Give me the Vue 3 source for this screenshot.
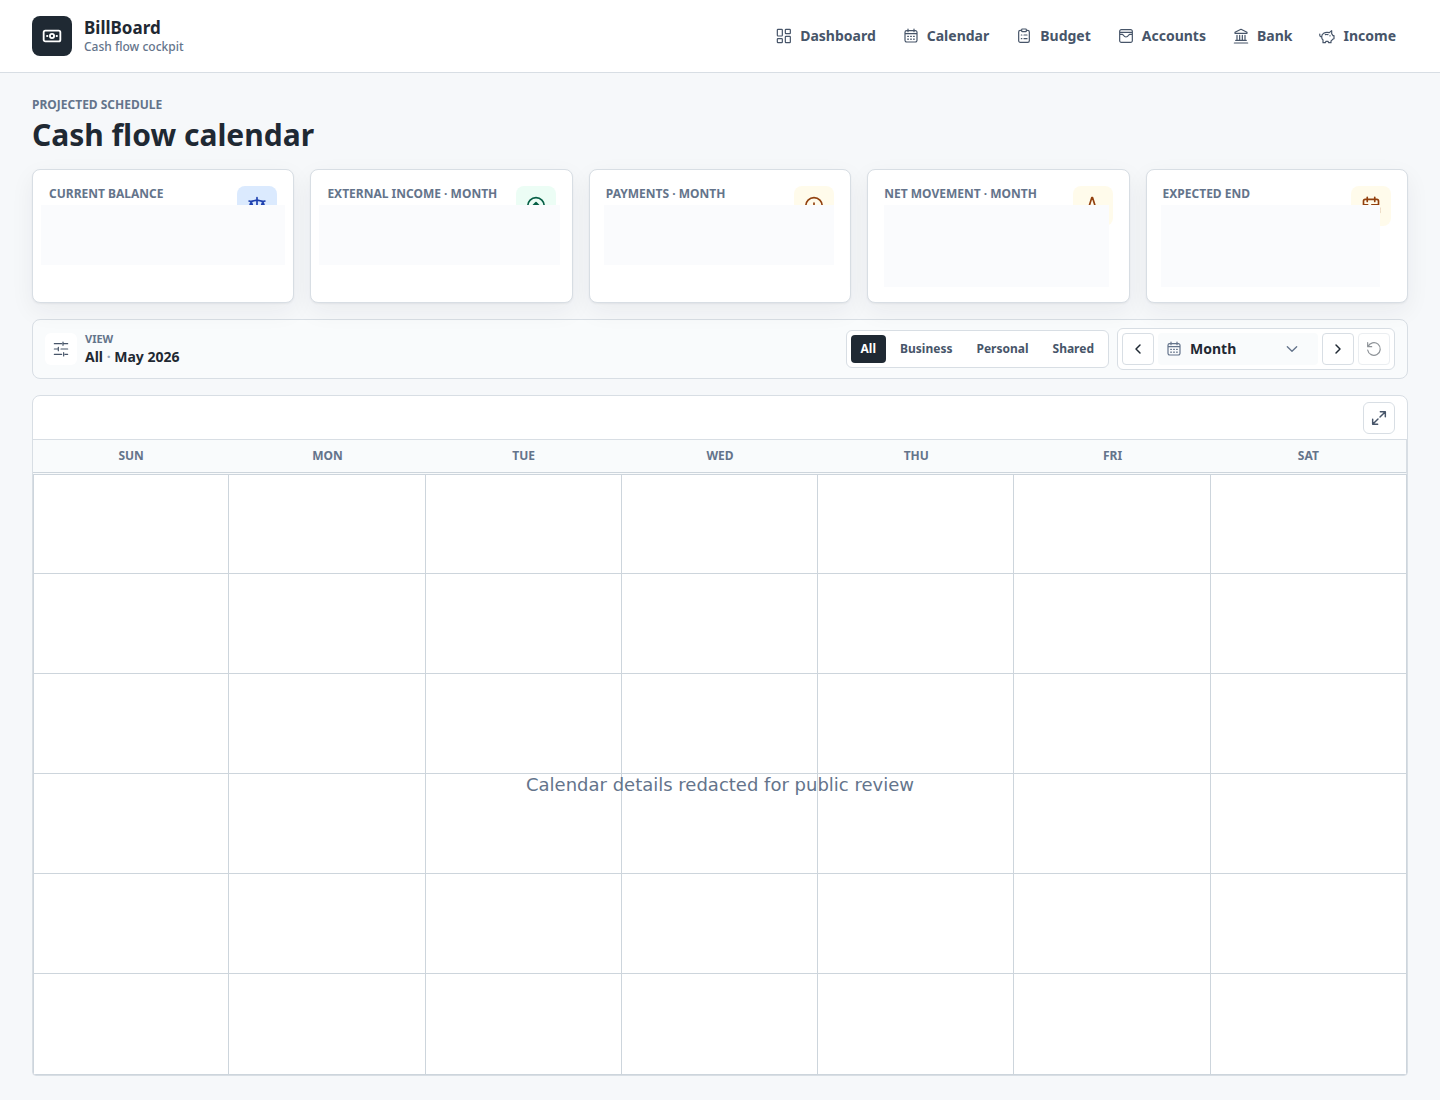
<script setup>
import { ref } from 'vue'

const calendarIcon =
  'M5.5 4h13A2.5 2.5 0 0 1 21 6.5v12a2.5 2.5 0 0 1-2.5 2.5h-13A2.5 2.5 0 0 1 3 18.5v-12A2.5 2.5 0 0 1 5.5 4zM3 8.5h18M7.5 1.5v4M16.5 1.5v4M7 12.5h1.2M11.4 12.5h1.2M15.8 12.5h1.2M7 16.8h1.2M11.4 16.8h1.2M15.8 16.8h1.2'

const navItems = [
  { label: 'Dashboard', icon: 'M3 2h5.5a1 1 0 0 1 1 1v8a1 1 0 0 1-1 1H3a1 1 0 0 1-1-1V3a1 1 0 0 1 1-1zM15 2h5.5a1 1 0 0 1 1 1v4.5a1 1 0 0 1-1 1H15a1 1 0 0 1-1-1V3a1 1 0 0 1 1-1zM3 16h5.5a1 1 0 0 1 1 1v4a1 1 0 0 1-1 1H3a1 1 0 0 1-1-1v-4a1 1 0 0 1 1-1zM15 12.5h5.5a1 1 0 0 1 1 1V21a1 1 0 0 1-1 1H15a1 1 0 0 1-1-1v-7.5a1 1 0 0 1 1-1z' },
  { label: 'Calendar', icon: calendarIcon },
  { label: 'Budget', icon: 'M8.5 3.5h-2A2.5 2.5 0 0 0 4 6v13a2.5 2.5 0 0 0 2.5 2.5h11A2.5 2.5 0 0 0 20 19V6a2.5 2.5 0 0 0-2.5-2.5h-2M9.5 1.5h5a1 1 0 0 1 1 1v2a1 1 0 0 1-1 1h-5a1 1 0 0 1-1-1v-2a1 1 0 0 1 1-1zM8 10.5h.8M8 16h.8M12 10.5h4.5M12 16h4.5' },
  { label: 'Accounts', icon: 'M5 2.5h14A2.5 2.5 0 0 1 21.5 5v14a2.5 2.5 0 0 1-2.5 2.5H5A2.5 2.5 0 0 1 2.5 19V5A2.5 2.5 0 0 1 5 2.5zM2.5 6.5h19M2.5 9.5h4c1.5 0 2 4 5.5 4s4-4 5.5-4h4' },
  { label: 'Bank', icon: 'M2 22.5h20M4 18.5h16M12 2l9 4.5V8H3V6.5zM6 11v7M10 11v7M14 11v7M18 11v7' },
  { label: 'Income', icon: 'M7 8c1.5-1 3-1.5 5-1.5 1.5 0 2.5.2 3.5.5L19 4v4.500c1 .8 1.5 1.8 2 3h1.5V16l-2 1c-.5 1-1.300 1.800-2.500 2.500V22h-3.500l-1-2h-3l-1 2H6v-4c-1.300-1.200-2-2.800-2-4.500C4 11.200 5 9.300 7 8zM4.200 13.500C2 13.500.8 11.700 1.200 9M16.500 11.500v.5M9.500 10c1.500-.4 2.700-.4 4 0' }
]

const cards = [
  { label: 'Current balance', tone: 'blue', cover: 'balance', icon: 'M12 2v20M2.5 6c4 1.5 6-1 9.500-1s5.500 2.500 9.500 1M5 6.500l-3 9h6zM19 6.500l-3 9h6zM7 22h10' },
  { label: 'External income · month', tone: 'green', cover: 'income', icon: 'M12 2a10 10 0 1 0 0 20a10 10 0 0 0 0-20M12 8v8M8.500 11.500L12 8l3.500 3.500' },
  { label: 'Payments · month', tone: 'amber', cover: 'payments', icon: 'M12 2a10 10 0 1 0 0 20a10 10 0 0 0 0-20M12 8.500v6M12 17v.5' },
  { label: 'Net movement · month', tone: 'amber', cover: 'movement', icon: 'M4 15h2.500l4-13h1l4 13h4' },
  { label: 'Expected end', tone: 'amber', cover: 'end', icon: 'M12 21H5a2 2 0 0 1-2-2V6a2 2 0 0 1 2-2h14a2 2 0 0 1 2 2v5M7.500 1.500v5M16.500 1.500v5M3 10.500h5M13 10.500h8M22 14v6M15 18l3 3 4-4' }
]

const scopes = ['All', 'Business', 'Personal', 'Shared']
const scope = ref('All')
const period = ref('Month')
const weekdays = ['Sun', 'Mon', 'Tue', 'Wed', 'Thu', 'Fri', 'Sat']
</script>

<template>
  <div class="page">
    <header class="topbar">
      <a class="brand" href="#">
        <span class="logo">
          <svg class="icon lg strong" viewBox="0 0 24 24"><rect x="2" y="5.5" width="20" height="13" rx="2" /><circle cx="12" cy="12" r="2.5" /><path d="M6 12h.5M17.500 12h.5" /></svg>
        </span>
        <span class="brand-text">
          <strong>BillBoard</strong>
          <small>Cash flow cockpit</small>
        </span>
      </a>
      <nav class="nav" aria-label="Main">
        <a v-for="item in navItems" :key="item.label" href="#">
          <svg class="icon" viewBox="0 0 24 24"><path :d="item.icon" /></svg>
          {{ item.label }}
        </a>
      </nav>
    </header>

    <main class="content">
      <div class="heading">
        <p class="eyebrow">Projected schedule</p>
        <h1>Cash flow calendar</h1>
      </div>

      <section class="cards" aria-label="Summary">
        <article v-for="card in cards" :key="card.label" class="card">
          <h2>{{ card.label }}</h2>
          <span class="tile" :class="card.tone">
            <svg class="icon lg" viewBox="0 0 24 24"><path :d="card.icon" /></svg>
          </span>
          <span class="cover" :class="card.cover"></span>
        </article>
      </section>

      <section class="toolbar" aria-label="View options">
        <div class="view">
          <span class="view-icon">
            <svg class="icon" viewBox="0 0 24 24"><path d="M2 4h11M16 4h6M15 1.5v5M2 12h5M12 12h10M8 9.5v5M2 20h11M18 20h4M16 17.5v5" /></svg>
          </span>
          <div>
            <p class="view-label">View</p>
            <p class="view-value">All <span>·</span> May 2026</p>
          </div>
        </div>
        <div class="controls">
          <div class="scopes" role="group" aria-label="Scope">
            <button v-for="name in scopes" :key="name" type="button" :class="{ active: name === scope }" @click="scope = name">{{ name }}</button>
          </div>
          <div class="period">
            <button class="square" type="button" aria-label="Previous">
              <svg class="icon strong" viewBox="0 0 24 24"><path d="M15 6l-6 6 6 6" /></svg>
            </button>
            <div class="picker">
              <svg class="icon" viewBox="0 0 24 24"><path :d="calendarIcon" /></svg>
              <select v-model="period" aria-label="Period">
                <option>Month</option>
                <option>Week</option>
              </select>
              <svg class="icon chevron" viewBox="0 0 24 24"><path d="M5 8.5l7 7 7-7" /></svg>
            </div>
            <button class="square" type="button" aria-label="Next">
              <svg class="icon strong" viewBox="0 0 24 24"><path d="M9 6l6 6-6 6" /></svg>
            </button>
            <button class="square" type="button" aria-label="Reset" disabled>
              <svg class="icon" viewBox="0 0 24 24"><path d="M2.5 2.5v6h6M3 8.5a9.5 9.5 0 1 1-.5 5" /></svg>
            </button>
          </div>
        </div>
      </section>

      <section class="calendar" aria-label="Calendar">
        <div class="calendar-bar">
          <button class="square expand" type="button" aria-label="Expand">
            <svg class="icon strong" viewBox="0 0 24 24"><path d="M14 2.5h7.5V10M21.5 2.5l-8 8M10 21.5H2.5V14M2.5 21.5l8-8" /></svg>
          </button>
        </div>
        <div class="grid">
          <table>
            <thead>
              <tr>
                <th v-for="day in weekdays" :key="day" scope="col">{{ day }}</th>
              </tr>
            </thead>
            <tbody>
              <tr v-for="week in 6" :key="week">
                <td v-for="day in weekdays" :key="day"></td>
              </tr>
            </tbody>
          </table>
          <p class="notice">Calendar details redacted for public review</p>
        </div>
      </section>
    </main>
  </div>
</template>

<style>
body {
  background: #f6f8fa;
}
</style>

<style scoped>
.page,
.page * {
  box-sizing: border-box;
}
.page {
  color: #1f2933;
  font-family: "Noto Sans", sans-serif;
  font-size: 14px;
  line-height: 20px;
}
p,
h1,
h2 {
  margin: 0;
}
a {
  color: inherit;
  text-decoration: none;
}
button,
select {
  font: inherit;
  color: inherit;
}
.icon {
  width: 16px;
  height: 16px;
  flex: none;
  fill: none;
  stroke: currentColor;
  stroke-width: 1.8;
  stroke-linecap: round;
  stroke-linejoin: round;
}
.icon.lg {
  width: 20px;
  height: 20px;
}
.icon.strong {
  stroke-width: 2.2;
}
.topbar {
  display: flex;
  align-items: center;
  justify-content: space-between;
  padding: 16px 32px;
  background: #fff;
  border-bottom: 1px solid #d8dee4;
}
.brand {
  display: flex;
  align-items: center;
  gap: 12px;
}
.logo {
  display: grid;
  place-items: center;
  width: 40px;
  height: 40px;
  border-radius: 8px;
  background: #1f2933;
  color: #fff;
}
.brand-text {
  display: grid;
}
.brand-text strong {
  font-size: 17px;
  font-weight: 700;
  line-height: 22px;
}
.brand-text small {
  font-size: 12px;
  font-weight: 500;
  line-height: 16px;
  color: #64748b;
}
.nav {
  display: flex;
  gap: 3px;
}
.nav a {
  display: flex;
  align-items: center;
  gap: 8px;
  padding: 8px 12px;
  color: #475569;
  font-weight: 700;
}
.content {
  display: grid;
  gap: 16px;
  padding: 24px 32px;
}
.eyebrow {
  font-size: 12px;
  font-weight: 700;
  line-height: 16px;
  color: #64748b;
  text-transform: uppercase;
}
h1 {
  margin-top: 4px;
  font-size: 30px;
  font-weight: 700;
  line-height: 36px;
}
.cards {
  display: grid;
  grid-template-columns: repeat(5, 1fr);
  gap: 16px;
}
.card {
  position: relative;
  display: flex;
  justify-content: space-between;
  align-items: flex-start;
  min-height: 134px;
  padding: 16px;
  background: #fff;
  border: 1px solid #d8dee4;
  border-radius: 8px;
  box-shadow: 0 1px 2px rgba(31, 41, 51, 0.06), 0 8px 24px rgba(31, 41, 51, 0.06);
}
.card h2 {
  font-size: 12px;
  font-weight: 700;
  line-height: 16px;
  color: #64748b;
  text-transform: uppercase;
}
.tile {
  display: grid;
  place-items: center;
  width: 40px;
  height: 40px;
  border-radius: 8px;
}
.tile .icon {
  stroke-width: 2;
}
.blue {
  background: #dbeafe;
  color: #1e40af;
}
.green {
  background: #ecfdf5;
  color: #065f46;
}
.amber {
  background: #fffbeb;
  color: #92400e;
}
.cover {
  position: absolute;
  top: 35px;
  left: 8px;
  right: 8px;
  height: 60px;
  background: #fafbfd;
}
.cover.income {
  right: 12px;
}
.cover.payments {
  left: 14px;
  right: 16px;
}
.cover.movement {
  left: 16px;
  right: 20px;
  height: 82px;
}
.cover.end {
  left: 14px;
  right: 27px;
  height: 82px;
}
.toolbar {
  display: flex;
  align-items: center;
  justify-content: space-between;
  padding: 8px 12px;
  background: #f9fbfc;
  border: 1px solid #d8dee4;
  border-radius: 8px;
}
.view {
  display: flex;
  align-items: center;
  gap: 8px;
}
.view-icon {
  display: grid;
  place-items: center;
  width: 32px;
  height: 32px;
  border-radius: 6px;
  background: #fff;
  color: #475569;
}
.view-label {
  font-size: 11px;
  font-weight: 700;
  line-height: 16px;
  color: #64748b;
  text-transform: uppercase;
}
.view-value {
  font-weight: 700;
}
.view-value span {
  color: #94a3b8;
}
.controls {
  display: flex;
  align-items: center;
  gap: 8px;
}
.scopes,
.period {
  display: flex;
  gap: 4px;
  padding: 4px;
  background: #fff;
  border: 1px solid #d8dee4;
  border-radius: 6px;
}
.scopes button {
  height: 28px;
  padding: 0 10px;
  border: 0;
  border-radius: 4px;
  background: none;
  color: #475569;
  font-size: 12px;
  font-weight: 700;
}
.scopes .active {
  background: #1f2933;
  color: #fff;
}
.square {
  display: grid;
  place-items: center;
  width: 32px;
  height: 32px;
  padding: 0;
  background: #fff;
  border: 1px solid #d8dee4;
  border-radius: 4px;
}
.square:disabled {
  opacity: 0.5;
}
.square.expand {
  border-radius: 6px;
  color: #475569;
}
.picker {
  display: flex;
  align-items: center;
  width: 160px;
  padding: 0 8px;
  border-radius: 4px;
  background: #f9fbfc;
  color: #64748b;
}
.picker select {
  flex: 1;
  align-self: stretch;
  min-width: 0;
  padding: 0 8px;
  border: 0;
  background: none;
  appearance: none;
  color: #1f2933;
  font-weight: 700;
}
.picker .chevron {
  margin-right: 10px;
  stroke-width: 2;
  pointer-events: none;
}
.calendar {
  overflow: hidden;
  background: #fff;
  border: 1px solid #d8dee4;
  border-radius: 8px 8px 4px 4px;
}
.calendar-bar {
  display: flex;
  justify-content: flex-end;
  padding: 6px 12px 5px;
  border-bottom: 1px solid #d8dee4;
}
.grid {
  display: grid;
}
.grid > * {
  grid-area: 1 / 1;
}
table {
  width: 100%;
  table-layout: fixed;
  border-collapse: separate;
  border-spacing: 0;
}
th {
  height: 35px;
  padding: 0;
  background: #f9fbfc;
  border-bottom: 3px double #cdd5dc;
  color: #64748b;
  font-size: 12px;
  font-weight: 700;
  line-height: 16px;
  text-transform: uppercase;
}
td {
  height: 100px;
  padding: 0;
  border-right: 1px solid #cdd5dc;
  border-bottom: 1px solid #cdd5dc;
}
tbody tr:first-child td {
  height: 99px;
}
tbody tr:last-child td {
  height: 101px;
}
th:last-child {
  border-right: 1px solid #d8dee4;
}
td:first-child {
  border-left: 1px solid #cdd5dc;
}
.notice {
  place-self: center;
  padding-top: 54px;
  color: #64748b;
  font-family: "DejaVu Sans", sans-serif;
  font-size: 18px;
  line-height: 24px;
}
</style>
